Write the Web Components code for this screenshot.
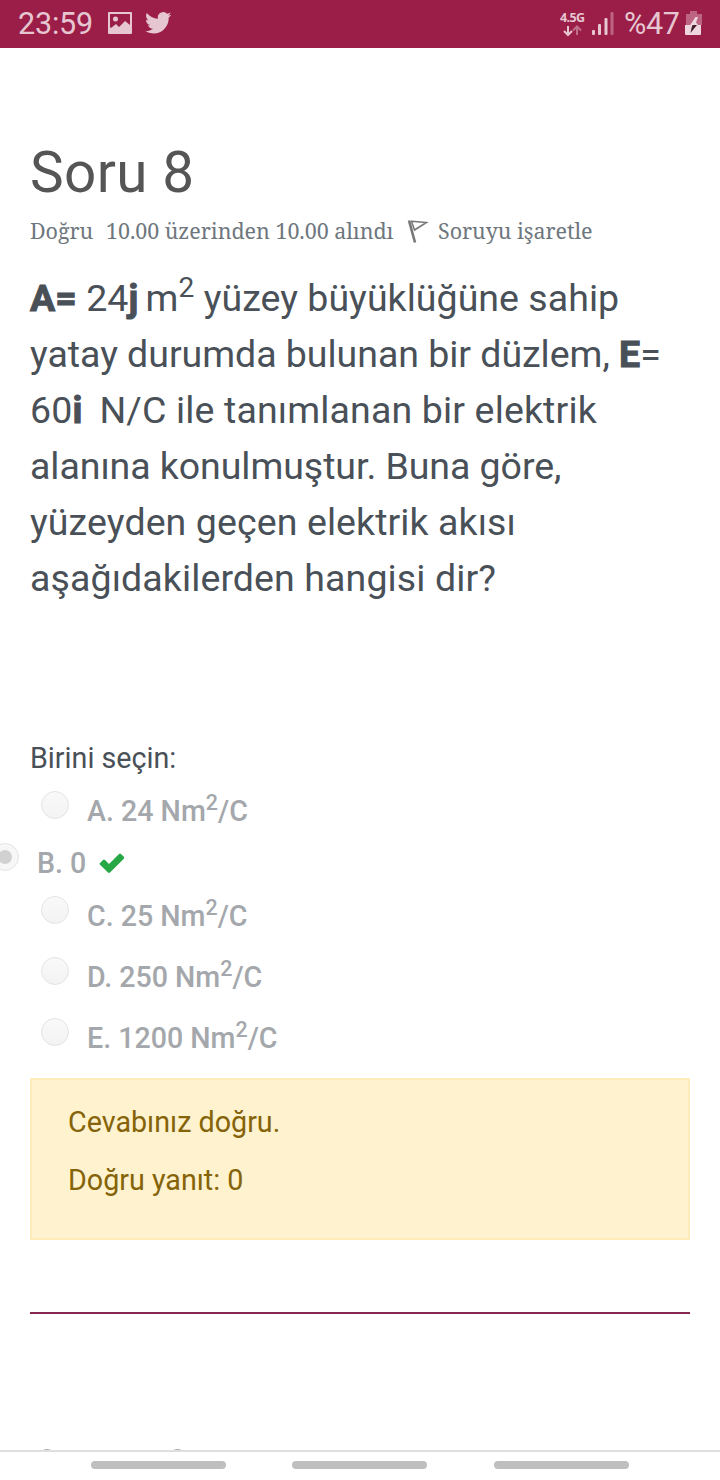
<!DOCTYPE html>
<html lang="tr"><head><meta charset="utf-8"><title>Soru 8</title>
<style>body{margin:0;background:#fff}</style></head><body>
<quiz-screen></quiz-screen>
<script>
const define=(name,html)=>{const t=document.createElement('template');t.innerHTML=html;
customElements.define(name,class extends HTMLElement{constructor(){super();this.attachShadow({mode:'open'}).append(t.content.cloneNode(true));}});};

define('status-bar',`<style>
:host{display:flex;height:48px;background:#9b1e48;color:#e6c6d1;font:30.5px/48px Roboto,sans-serif;white-space:nowrap}
svg{display:block;flex:none}.time{width:90px;padding-left:18px;letter-spacing:-.2px}
.tw{margin-left:13px}.net{margin-left:auto;width:32px;display:flex;flex-direction:column;padding-top:10px}
.net span{font:700 12.5px/15px "Open Sans",sans-serif;letter-spacing:-.6px}.net svg{margin:0 0 0 3px}
.pct{margin-left:10px;width:61px;letter-spacing:-.4px}
</style>
<span class="time">23:59</span>
<svg width="24" height="48" viewBox="0 0 24 48"><path fill="#e6c6d1" fill-rule="evenodd" d="M1 12H23Q24 12 24 13V33Q24 34 23 34H1Q0 34 0 33V13Q0 12 1 12ZM2 14V27L3 28L8 24L11 27L17 21L22 25V14ZM7.5 16.5A2.5 2.5 0 1 1 7.5 21.5A2.5 2.5 0 1 1 7.5 16.5Z"/></svg>
<svg class="tw" width="27" height="48" viewBox="0 0 27 48"><path fill="#e6c6d1" transform="translate(0 9.6) scale(1.1)" d="M23.95 4.57a10 10 0 0 1-2.82.77 4.96 4.96 0 0 0 2.16-2.72c-.95.55-2 .95-3.13 1.18a4.92 4.92 0 0 0-8.38 4.48C7.69 8.1 4.07 6.13 1.64 3.16a4.82 4.82 0 0 0-.67 2.48c0 1.71.87 3.21 2.19 4.1a4.9 4.9 0 0 1-2.23-.62v.06a4.92 4.92 0 0 0 3.95 4.83 5 5 0 0 1-2.21.08 4.94 4.94 0 0 0 4.6 3.42A9.87 9.87 0 0 1 0 19.54a13.99 13.99 0 0 0 7.56 2.21c9.05 0 14-7.5 14-13.98 0-.21 0-.42-.02-.63a9.94 9.94 0 0 0 2.46-2.55z"/></svg>
<div class="net"><span>4.5G</span><svg width="20" height="12" viewBox="0 0 20 12" fill="none" stroke-width="2"><path stroke="#e6c6d1" d="M5 1V9.5M1 6L5 10L9 6"/><path stroke="#c1708a" d="M14 10V2M10 5.5L14 1.5L18 5.5"/></svg></div>
<svg width="22" height="48" viewBox="0 0 22 48"><g fill="#e6c6d1"><rect y="30" width="3" height="5" rx="1"/><rect x="6" y="24" width="3" height="11" rx="1"/><rect x="12.5" y="18" width="3" height="17" rx="1"/></g><rect x="18.5" y="12" width="3" height="23" rx="1" fill="#bd6482"/></svg>
<span class="pct">%47</span>
<svg width="35" height="48" viewBox="0 0 35 48"><path fill="#bd6482" d="M5 11H12V14H17V25H1V14H5Z"/><path fill="#efd5de" d="M0 25H16V34Q16 35 15 35H1Q0 35 0 34Z"/><path fill="#efd5de" d="M10.5 17L4.5 26H8L13 25L11 22.5L13 17Z"/><path fill="#451d2b" d="M7.5 25H12L5.5 33L6.5 28Z"/></svg>`);

define('question-heading',`<style>:host{display:block;height:67px;font:56.6px/67px Roboto,sans-serif;letter-spacing:.4px;color:#555;white-space:nowrap}</style><slot></slot>`);

define('question-info',`<style>
:host{display:flex;height:32px;font:21.5px/32px "Noto Serif","DejaVu Serif",serif;color:#6f777e;white-space:pre}
.s{width:76px;letter-spacing:-.05px}.g{width:301px;letter-spacing:-.05px}svg{display:block;width:31px;height:32px}.m{letter-spacing:-.05px}
</style><span class="s">Doğru</span><span class="g">10.00 üzerinden 10.00 alındı</span><svg viewBox="0 0 31 32" fill="none" stroke="#777"><path stroke-width="2.6" d="M2 5.5L8 27.5"/><path stroke-width="1.5" d="M4.5 6.3L19.5 7.5L7.5 15Z"/></svg><span class="m">Soruyu işaretle</span>`);

define('question-text',`<style>
:host{display:block;font:37.5px/56px Roboto,sans-serif;color:#495057;white-space:pre}
div{height:56px}b{font-weight:700;-webkit-text-stroke:1px #495057}b.t{margin-right:-2px}sup{font-size:75%;line-height:0;vertical-align:baseline;position:relative;top:-.5em}
</style><div style="letter-spacing:.04px"><b>A=</b> 24<b class="t">j</b> m<sup>2</sup> yüzey büyüklüğüne sahip</div><div style="letter-spacing:-.03px">yatay durumda bulunan bir düzlem, <b>E</b>=</div><div style="letter-spacing:.15px">60<b class="t">i</b>  N/C ile tanımlanan bir elektrik</div><div style="letter-spacing:-.06px">alanına konulmuştur. Buna göre,</div><div style="letter-spacing:.1px">yüzeyden geçen elektrik akısı</div><div style="letter-spacing:.11px">aşağıdakilerden hangisi dir?</div>`);

define('answer-option',`<style>
:host{display:flex;height:61px;padding-left:11px;color:#a4a7ab;font:500 28.6px/40px Roboto,sans-serif;white-space:pre}
i{box-sizing:border-box;flex:none;width:28px;height:28px;border:1px solid #e4e4e4;border-radius:50%;background:linear-gradient(#f9f9f9,#f3f3f3);margin-right:18px;display:grid;place-items:center}
:host([checked]){padding-left:0;margin-left:-39px;height:53px}:host([checked]) i{background:#f7f7f7}
:host([checked]) i:after{content:"";width:14px;height:14px;border-radius:50%;background:#d1d1d1}
:host([short]){height:52px}
</style><i></i><span><slot></slot></span><slot name="mark"></slot>`);

define('check-mark',`<style>:host{display:block;margin-left:12.5px;height:40px;white-space:normal}svg{display:block}</style><svg width="26" height="40" viewBox="0 0 26 40"><path fill="#28a745" d="M0.8 20.2L4 17Q5 16.2 6 17L10 21L20 11Q21 10.1 22 11L24.8 13.8Q25.8 14.8 24.8 15.8L11 29.5Q10 30.3 9 29.5L.8 21.5Q.2 20.8.8 20.2Z"/></svg>`);

define('answer-feedback',`<style>:host{display:block;box-sizing:border-box;height:162px;background:#fff2ce;border:2px solid #ffecb8;padding:21.5px 36px;color:#856308;font:28.7px/40px Roboto,sans-serif;white-space:nowrap}p{margin:0 0 18px}</style><p>Cevabınız doğru.</p><p>Doğru yanıt: 0</p>`);

define('nav-bar',`<style>:host{display:flex;box-sizing:border-box;height:30px;border-top:2px solid #dfdfdf;background:#fff;padding:9px 91px 0;justify-content:space-between}i{width:135px;height:8px;border-radius:4px;background:#bfbfbf}i+i{margin-left:-1px}i+i+i{margin-left:0}</style><i></i><i></i><i></i>`);

define('quiz-screen',`<style>
:host{display:flex;flex-direction:column;width:720px;height:1480px;overflow:hidden;background:#fff}
main{height:1402px;box-sizing:border-box;padding:91px 30px 0;overflow:hidden;font-family:Roboto,sans-serif}
question-info{margin-top:9px}question-text{margin-top:23px}
.prompt{font:28.7px/40px Roboto,sans-serif;color:#495057;margin-top:132px;height:40px}
.opts{height:287px;margin-top:13px}hr{margin:72px 0 124px;border:0;height:2px;background:#872650}
sup{font-size:75%;line-height:0;vertical-align:baseline;position:relative;top:-.5em}
</style><status-bar></status-bar><main><question-heading>Soru 8</question-heading><question-info></question-info><question-text></question-text>
<div class="prompt">Birini seçin:</div>
<div class="opts"><answer-option short>A. 24 Nm<sup>2</sup>/C</answer-option><answer-option checked>B. 0<check-mark slot="mark"></check-mark></answer-option><answer-option>C. 25 Nm<sup>2</sup>/C</answer-option><answer-option>D. 250 Nm<sup>2</sup>/C</answer-option><answer-option>E. 1200 Nm<sup>2</sup>/C</answer-option></div>
<answer-feedback></answer-feedback><hr><question-heading>Soru 9</question-heading></main><nav-bar></nav-bar>`);
</script></body></html>
